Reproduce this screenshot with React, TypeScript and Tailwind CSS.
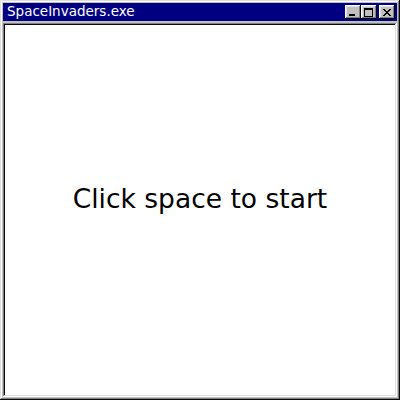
import React from "react";

export default function App() {
  return (
    <div className="w-[400px] h-[400px] bg-[#c0c0c0] p-[3px] flex flex-col shadow-[inset_-1px_-1px_#0a0a0a,inset_1px_1px_#dfdfdf,inset_-2px_-2px_#808080,inset_2px_2px_#ffffff]" style={{ fontFamily: '"DejaVu Sans", Verdana, sans-serif' }}>
      <div className="h-[18px] bg-[#000080] flex items-center justify-between pl-[4px] pr-[2px]">
        <span className="text-white text-[13.5px] leading-none">SpaceInvaders.exe</span>
        <div className="flex items-center">
          <button className="w-[16px] h-[14px] bg-[#c0c0c0] shadow-[inset_-1px_-1px_#0a0a0a,inset_1px_1px_#ffffff,inset_-2px_-2px_#808080,inset_2px_2px_#dfdfdf] flex items-end justify-center pb-[3px]">
            <div className="w-[6px] h-[2px] bg-black -ml-[2px]" />
          </button>
          <button className="w-[16px] h-[14px] bg-[#c0c0c0] shadow-[inset_-1px_-1px_#0a0a0a,inset_1px_1px_#ffffff,inset_-2px_-2px_#808080,inset_2px_2px_#dfdfdf] flex items-center justify-center">
            <div className="w-[9px] h-[9px] border border-black border-t-2 -ml-[1px]" />
          </button>
          <button className="ml-[2px] w-[16px] h-[14px] bg-[#c0c0c0] shadow-[inset_-1px_-1px_#0a0a0a,inset_1px_1px_#ffffff,inset_-2px_-2px_#808080,inset_2px_2px_#dfdfdf] flex items-center justify-center">
            <svg width="8" height="7" viewBox="0 0 8 7" className="-ml-[1px]" shapeRendering="crispEdges">
              <path d="M0 0h2v1h1v1h2v-1h1v-1h2v1h-1v1h-1v1h-1v1h1v1h1v1h1v1h-2v-1h-1v-1h-2v1h-1v1h-2v-1h1v-1h1v-1h1v-1h-1v-1h-1v-1h-1z" fill="#000" />
            </svg>
          </button>
        </div>
      </div>
      <div className="mt-[2px] flex-1 bg-white p-[2px] pb-[24px] shadow-[inset_-1px_-1px_#ffffff,inset_1px_1px_#808080,inset_-2px_-2px_#dfdfdf,inset_2px_2px_#0a0a0a] flex items-center justify-center">
        <span className="text-[26.5px] text-black leading-none">Click space to start</span>
      </div>
    </div>
  );
}
